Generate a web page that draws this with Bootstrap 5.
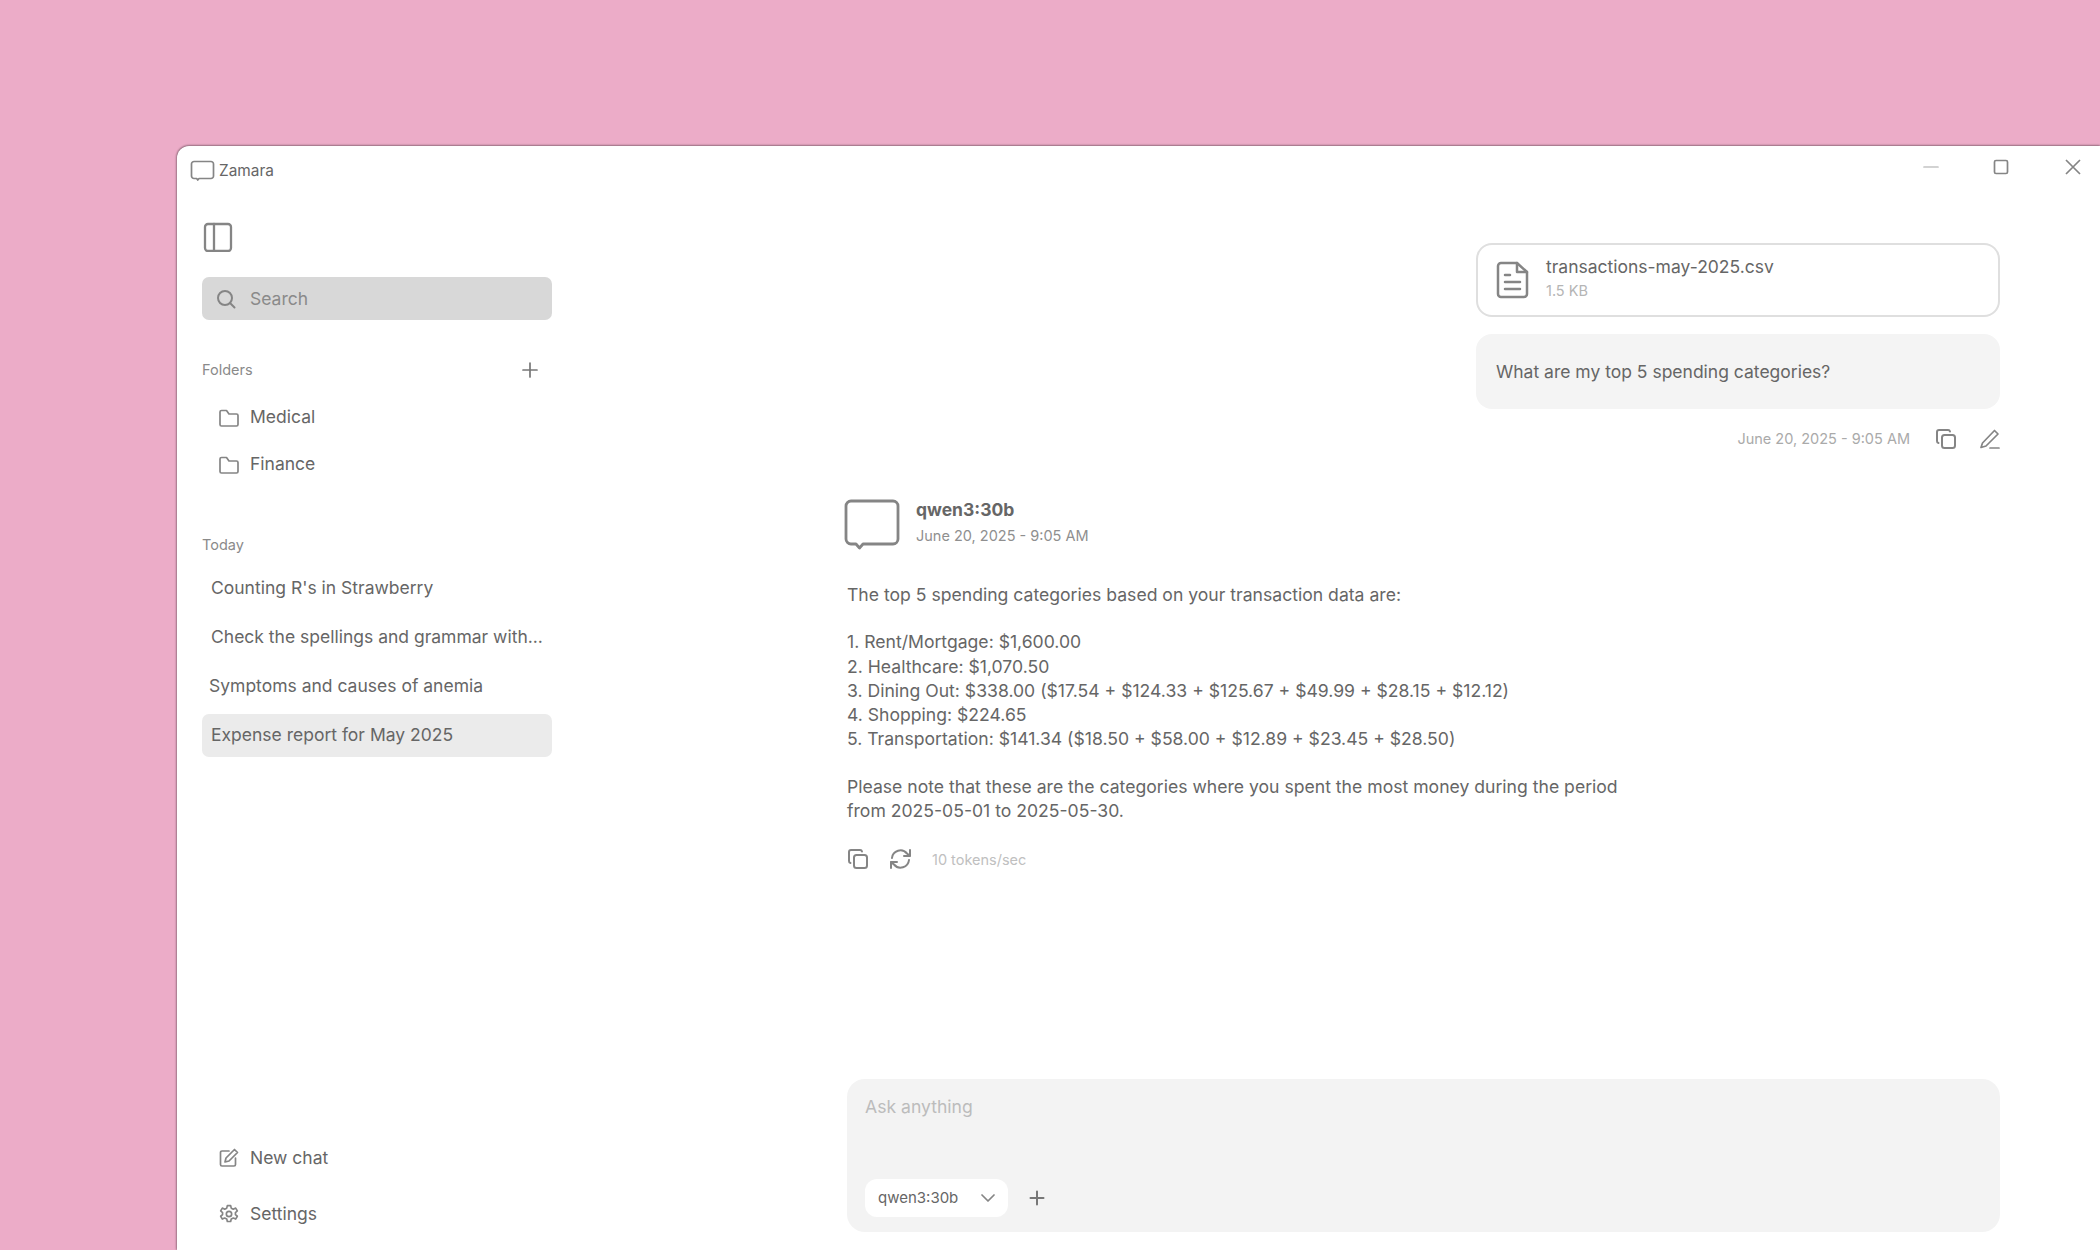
<!doctype html>
<html lang="en">
<head>
<meta charset="utf-8">
<title>Zamara</title>
<link href="https://cdn.jsdelivr.net/npm/bootstrap@5.3.0/dist/css/bootstrap.min.css" rel="stylesheet">
<style>
html,body{height:100%;}
body{background:#ecacc8;font-family:Inter,"Liberation Sans",sans-serif;color:#666;font-size:17.5px;overflow:hidden;}
.app-window{margin:146px 0 0 177px;height:1104px;background:#fff;border-radius:12px 0 0 0;box-shadow:0 -1px 2px rgba(0,0,0,.3),-1px 0 2px rgba(0,0,0,.25);}
.ico{fill:none;stroke:#858585;stroke-width:1.7;stroke-linecap:round;stroke-linejoin:round;flex:none;display:block;}
.title-bar{height:50px;padding:0 13px;}
.title-name{font-size:15.4px;margin-left:4px;}
.win-ctl{position:absolute;top:13px;}
.ctl-min{right:161px;stroke:#c4c4c4;}
.ctl-max{right:91px;}
.ctl-close{right:18px;}
.side-col{width:400px;padding:0 25px 0 25px;}
.toggle-ico{margin:26px 0 0 1px;stroke-width:2.3;}
.search-box{height:43px;background:#d8d8d8;border-radius:7px;padding:1px 14px 0;margin-top:25px;color:#8a8a8a;gap:14px;}
.search-ico{stroke-width:2;}
.side-label{font-size:14.5px;color:#8a8a8a;}
.folders-head{margin-top:41px;height:18px;padding-right:14px;}
.plus-ico{stroke:#777;}
.folder-list{margin-top:15px;}
.folder-row{height:47px;padding-left:17px;gap:11px;}
.today-head{margin-top:48px;margin-bottom:13px;line-height:18px;}
.chat-row{height:43px;padding:0 0 0 9px;margin-bottom:6px;border-radius:7px;white-space:nowrap;}
.chat-shift{padding-left:7px;}
.chat-row.active-row{background:#ebebeb;}
.foot-list{padding-bottom:8px;}
.foot-row{height:56px;padding-left:17px;gap:11px;}
.gear-ico{stroke-width:2;}
.main-col{padding:0 100px 18px 270px;min-width:0;}
.user-col{width:524px;}
.file-box{height:74px;border:2px solid #dfdfdf;border-radius:16px;padding:0 18px;gap:17px;margin-top:47px;}
.file-ico{stroke-width:2.5;}
.file-text{padding-bottom:5px;}
.file-name{font-size:17.5px;line-height:23px;margin-bottom:0;}
.file-size{font-size:14.5px;line-height:20px;margin-top:3px;color:#b5b5b5;}
.user-bubble{height:75px;background:#f4f4f4;border-radius:16px;padding:1px 20px 0;margin-top:17px;}
.meta-row{margin-top:18px;height:24px;font-size:14.5px;color:#aaa;}
.meta-date{margin-right:25px;}
.meta-copy{margin-right:22px;stroke-width:2;}
.meta-pen{margin-right:-1px;}
.model-head{margin-top:48px;margin-left:-3px;gap:16px;}
.model-ico{stroke-width:2.8;}
.model-name{font-size:17.5px;font-weight:700;line-height:22px;margin-bottom:3px;}
.model-date{font-size:14.5px;line-height:24px;color:#8f8f8f;}
.answer-text{font-size:17.6px;line-height:24.3px;width:800px;margin-top:33px;}
.answer-text p{margin:0 0 23px;}
.tok-row{margin-top:0;gap:20px;font-size:14.5px;color:#c0c0c0;height:26px;}
.tok-ico{stroke-width:2;}
.ask-box{height:153px;background:#f3f3f3;border-radius:18px;padding:16px 18px 15px;}
.ask-ph{color:#bcbcbc;font-size:17.6px;line-height:24px;}
.ask-controls{gap:21px;}
.model-chip{height:38px;width:143px;background:#fff;border-radius:12px;padding:0 13px;font-size:15px;}
.ask-plus{stroke:#777;stroke-width:2;}
</style>
</head>
<body>
<div class="app-window d-flex flex-column position-relative">
  <div class="title-bar d-flex align-items-center">
    <svg class="ico" width="25" height="22" viewBox="0 0 25 22"><path d="M4 1.500h17a2.500 2.500 0 0 1 2.500 2.500v12a2.500 2.500 0 0 1-2.500 2.500H9l-1.200 1.500-1.200-1.500H4A2.500 2.500 0 0 1 1.500 16V4A2.500 2.500 0 0 1 4 1.500z"/></svg>
    <span class="title-name">Zamara</span>
    <svg class="ico win-ctl ctl-min" width="16" height="16" viewBox="0 0 16 16"><path d="M1 8h14"/></svg>
    <svg class="ico win-ctl ctl-max" width="16" height="16" viewBox="0 0 16 16"><rect x="1.500" y="1.500" width="13" height="13" rx="1.500"/></svg>
    <svg class="ico win-ctl ctl-close" width="18" height="16" viewBox="0 0 18 16"><path d="M2 1l14 14M16 1L2 15" stroke-linecap="butt"/></svg>
  </div>
  <div class="d-flex flex-grow-1 overflow-hidden">
    <aside class="side-col d-flex flex-column flex-shrink-0">
      <svg class="ico toggle-ico" width="30" height="30" viewBox="0 0 30 30"><rect x="2" y="2" width="26" height="27" rx="3"/><path d="M11 2v27"/></svg>
      <div class="search-box d-flex align-items-center">
        <svg class="ico search-ico" width="20" height="20" viewBox="0 0 20 20"><circle cx="9" cy="9" r="7"/><path d="M14 14l4.500 4.500"/></svg>
        <span>Search</span>
      </div>
      <div class="side-label d-flex justify-content-between align-items-center folders-head">
        <span>Folders</span>
        <svg class="ico plus-ico" width="16" height="16" viewBox="0 0 16 16"><path d="M8 1v14M1 8h14"/></svg>
      </div>
      <div class="folder-list">
        <div class="folder-row d-flex align-items-center"><svg class="ico" width="20" height="18" viewBox="0 0 20 18"><path d="M1 3a1.500 1.500 0 0 1 1.500-1.500h5L10 5h7.500A1.500 1.500 0 0 1 19 6.500v9a1.500 1.500 0 0 1-1.500 1.500h-15A1.500 1.500 0 0 1 1 15.500z"/></svg><span>Medical</span></div>
        <div class="folder-row d-flex align-items-center"><svg class="ico" width="20" height="18" viewBox="0 0 20 18"><path d="M1 3a1.500 1.500 0 0 1 1.500-1.500h5L10 5h7.500A1.500 1.500 0 0 1 19 6.500v9a1.500 1.500 0 0 1-1.500 1.500h-15A1.500 1.500 0 0 1 1 15.500z"/></svg><span>Finance</span></div>
      </div>
      <div class="side-label today-head">Today</div>
      <div class="chat-row d-flex align-items-center">Counting R's in Strawberry</div>
      <div class="chat-row d-flex align-items-center">Check the spellings and grammar with...</div>
      <div class="chat-row chat-shift d-flex align-items-center">Symptoms and causes of anemia</div>
      <div class="chat-row active-row d-flex align-items-center">Expense report for May 2025</div>
      <div class="foot-list mt-auto">
        <div class="foot-row d-flex align-items-center"><svg class="ico" width="20" height="20" viewBox="0 0 20 20"><path d="M10 3H3a1.500 1.500 0 0 0-1.500 1.500v12A1.500 1.500 0 0 0 3 18h12a1.500 1.500 0 0 0 1.500-1.500V10"/><path d="M15.500 1.500l3 3L10 13l-4 1 1-4z"/></svg><span>New chat</span></div>
        <div class="foot-row d-flex align-items-center"><svg class="ico gear-ico" width="20" height="20" viewBox="0 0 24 24"><circle cx="12" cy="12" r="3.200"/><path d="M10 2h4l.7 3 2.500 1.200 2.800-1.300 2 3.400-2.300 2v2.400l2.300 2-2 3.400-2.800-1.300-2.500 1.200-.7 3h-4l-.7-3-2.500-1.200-2.800 1.300-2-3.400 2.300-2v-2.400l-2.300-2 2-3.400 2.800 1.300L9.300 5z"/></svg><span>Settings</span></div>
      </div>
    </aside>
    <main class="main-col flex-grow-1 d-flex flex-column">
      <div class="d-flex flex-column align-items-end">
        <div class="user-col">
          <div class="file-box d-flex align-items-center">
            <svg class="ico file-ico" width="33" height="38" viewBox="0 0 33 38"><path d="M5 2h16l10 9v22a3 3 0 0 1-3 3H5a3 3 0 0 1-3-3V5a3 3 0 0 1 3-3z"/><path d="M21 2v9h10M9 14h5M9 21h15M9 28h15"/></svg>
            <div class="file-text"><div class="file-name">transactions-may-2025.csv</div><div class="file-size">1.5 KB</div></div>
          </div>
          <div class="user-bubble d-flex align-items-center">What are my top 5 spending categories?</div>
          <div class="meta-row d-flex align-items-center justify-content-end">
            <span class="meta-date">June 20, 2025 - 9:05 AM</span>
            <svg class="ico meta-copy" width="22" height="22" viewBox="0 0 22 22"><rect x="7" y="7" width="13" height="13" rx="2.500"/><path d="M15 3.500A2 2 0 0 0 13 2H4a2 2 0 0 0-2 2v9a2 2 0 0 0 1.500 2"/></svg>
            <svg class="ico meta-pen" width="22" height="22" viewBox="0 0 22 22"><path d="M15.500 2.500l3.500 3.500L7 18l-5 1.500L3.500 15z"/><path d="M11 20h9"/></svg>
          </div>
        </div>
      </div>
      <div class="d-flex model-head">
        <svg class="ico model-ico flex-shrink-0" width="56" height="51" viewBox="0 0 56 51"><path d="M7 2h42a5 5 0 0 1 5 5v33a5 5 0 0 1-5 5H19l-3.500 4-3.500-4H7a5 5 0 0 1-5-5V7a5 5 0 0 1 5-5z"/></svg>
        <div><div class="model-name">qwen3:30b</div><div class="model-date">June 20, 2025 - 9:05 AM</div></div>
      </div>
      <div class="answer-text">
        <p>The top 5 spending categories based on your transaction data are:</p>
        <p>1. Rent/Mortgage: $1,600.00<br>2. Healthcare: $1,070.50<br>3. Dining Out: $338.00 ($17.54 + $124.33 + $125.67 + $49.99 + $28.15 + $12.12)<br>4. Shopping: $224.65<br>5. Transportation: $141.34 ($18.50 + $58.00 + $12.89 + $23.45 + $28.50)</p>
        <p>Please note that these are the categories where you spent the most money during the period<br>from 2025-05-01 to 2025-05-30.</p>
      </div>
      <div class="tok-row d-flex align-items-center">
        <svg class="ico tok-ico" width="22" height="22" viewBox="0 0 22 22"><rect x="7" y="7" width="13" height="13" rx="2.500"/><path d="M15 3.500A2 2 0 0 0 13 2H4a2 2 0 0 0-2 2v9a2 2 0 0 0 1.500 2"/></svg>
        <svg class="ico tok-ico" width="23" height="22" viewBox="0 0 23 22"><path d="M3 10A8.500 8.500 0 0 1 18 5.500L21 8M21 2v6h-6M20 12A8.500 8.500 0 0 1 5 16.500L2 14M2 20v-6h6"/></svg>
        <span>10 tokens/sec</span>
      </div>
      <div class="ask-box mt-auto d-flex flex-column justify-content-between">
        <div class="ask-ph">Ask anything</div>
        <div class="d-flex align-items-center ask-controls">
          <div class="model-chip d-flex align-items-center justify-content-between"><span>qwen3:30b</span><svg class="ico" width="14" height="8" viewBox="0 0 14 8"><path d="M1 1l6 6 6-6"/></svg></div>
          <svg class="ico ask-plus" width="16" height="16" viewBox="0 0 16 16"><path d="M8 1.500v13M1.500 8h13"/></svg>
        </div>
      </div>
    </main>
  </div>
</div>
</body>
</html>
